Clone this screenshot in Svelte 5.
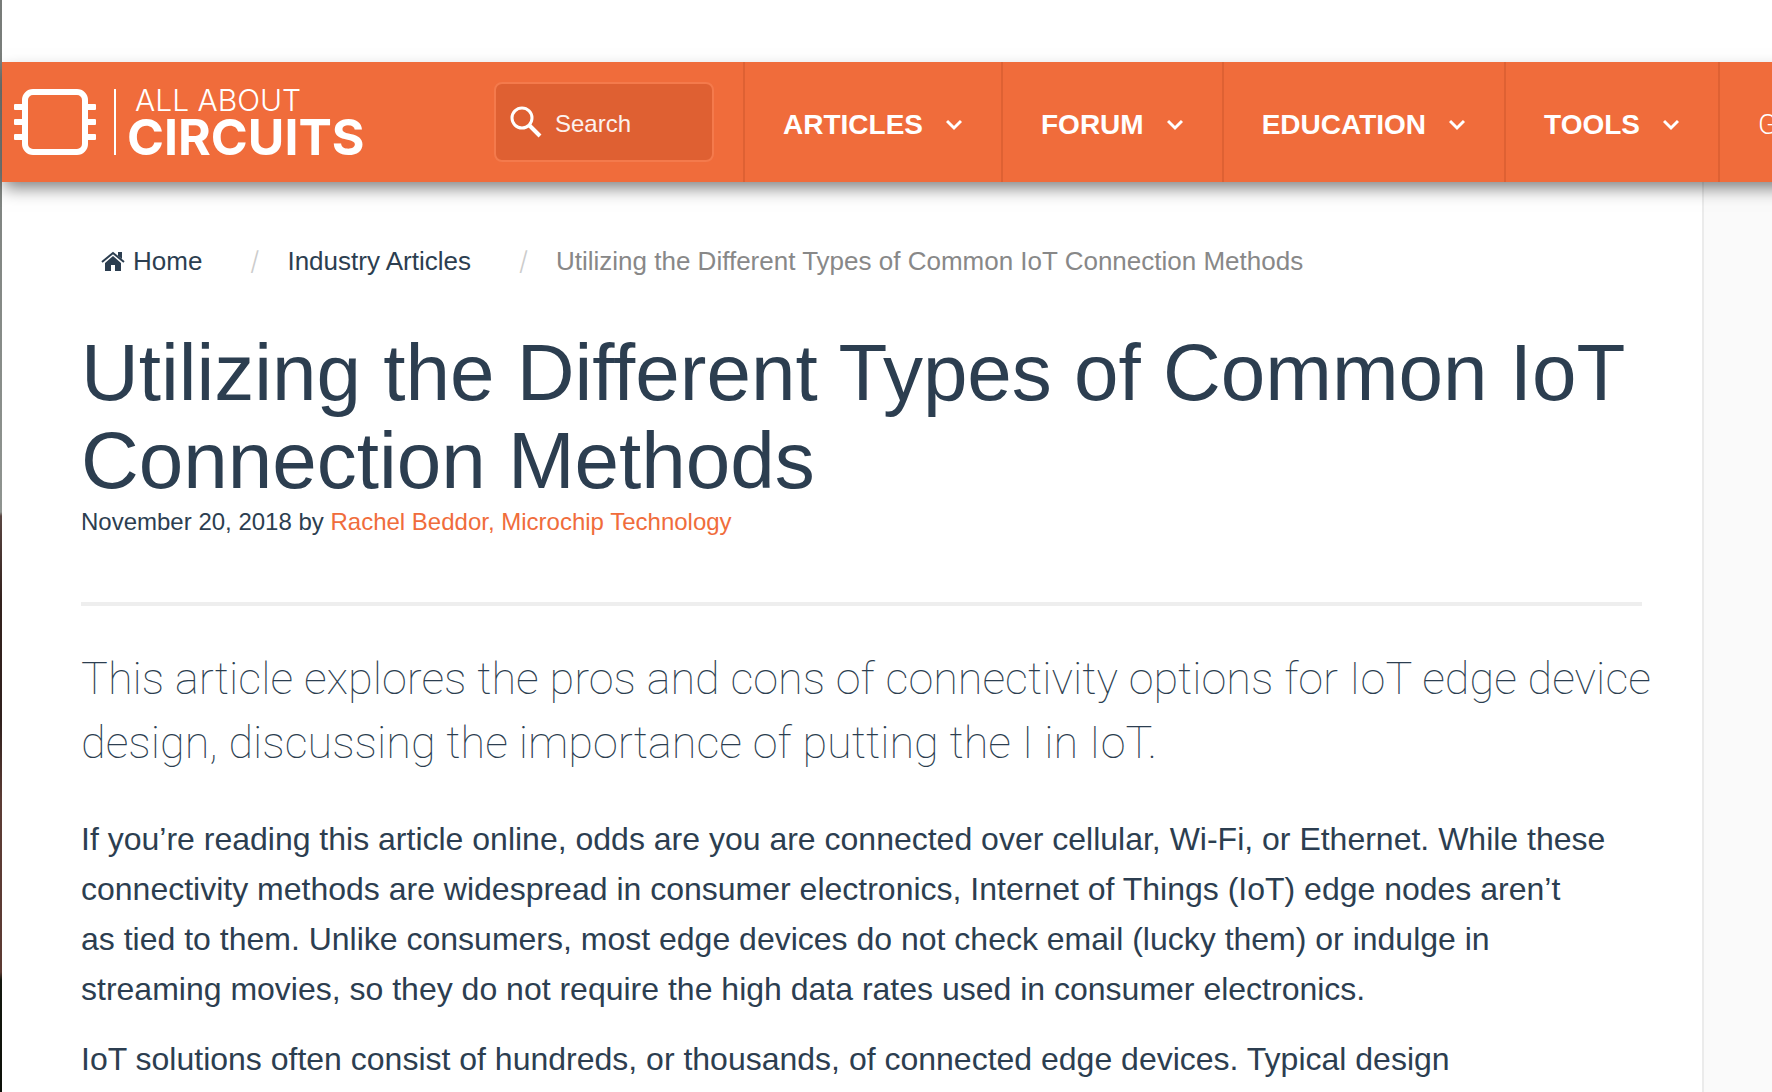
<script>
  const menu = ['ARTICLES', 'FORUM', 'EDUCATION', 'TOOLS'];
</script>

<div class="page">
  <div class="edge"></div>
  <div class="site">
    <header class="bar">
      <a class="logo" href="/" aria-label="All About Circuits">
        <svg class="chip" viewBox="0 0 84 68" width="84" height="68" aria-hidden="true">
          <g fill="#fff">
            <rect x="0" y="16" width="11" height="6" rx="1" />
            <rect x="0" y="31" width="11" height="6" rx="1" />
            <rect x="0" y="46" width="11" height="6" rx="1" />
            <rect x="71" y="16" width="11" height="6" rx="1" />
            <rect x="71" y="31" width="11" height="6" rx="1" />
            <rect x="71" y="46" width="11" height="6" rx="1" />
          </g>
          <rect x="11" y="4" width="60" height="60" rx="8" fill="none" stroke="#fff" stroke-width="6" />
        </svg>
        <span class="words">
          <span class="small">ALL ABOUT</span>
          <span class="big">CIRCUITS</span>
        </span>
      </a>
      <label class="search">
        <svg viewBox="0 0 32 32" width="32" height="32" aria-hidden="true">
          <circle cx="12" cy="12" r="10" fill="none" stroke="#fff" stroke-width="3" />
          <path d="M19 19 L30 30" stroke="#fff" stroke-width="4" />
        </svg>
        <input type="text" placeholder="Search" aria-label="Search" />
      </label>
      <nav>
        {#each menu as item}
          <button type="button">
            {item}
            <svg viewBox="0 0 16 12" width="16" height="12" aria-hidden="true">
              <path d="M1 2 L8 9 L15 2" fill="none" stroke="#fff" stroke-width="3" />
            </svg>
          </button>
        {/each}
        <a class="more" href="/">G</a>
      </nav>
    </header>

    <div class="columns">
      <main>
        <nav class="crumbs" aria-label="Breadcrumb">
          <a class="home" href="/">
            <svg viewBox="0 0 24 22" width="24" height="22" aria-hidden="true">
              <path d="M1 12 L12 3 L23 12" fill="none" stroke="#2c3e50" stroke-width="2" />
              <path d="M17 2 H21 V9 L17 6 Z M12 6 L20 13 V21 H14 V15 H10 V21 H4 V13 Z" fill="#2c3e50" />
            </svg>
            Home
          </a>
          <span class="slash">/</span>
          <a href="/">Industry Articles</a>
          <span class="slash">/</span>
          <span class="here">Utilizing the Different Types of Common IoT Connection Methods</span>
        </nav>
        <h1>Utilizing the Different Types of Common IoT Connection Methods</h1>
        <p class="byline">November 20, 2018 by <a href="/">Rachel Beddor, Microchip Technology</a></p>
        <hr />
        <p class="intro">
          This article explores the pros and cons of connectivity options for IoT edge device<br />
          design, discussing the importance of putting the I in IoT.
        </p>
        <p class="body">
          If you’re reading this article online, odds are you are connected over cellular, Wi-Fi, or Ethernet. While these<br />
          connectivity methods are widespread in consumer electronics, Internet of Things (IoT) edge nodes aren’t<br />
          as tied to them. Unlike consumers, most edge devices do not check email (lucky them) or indulge in<br />
          streaming movies, so they do not require the high data rates used in consumer electronics.
        </p>
        <p class="body">IoT solutions often consist of hundreds, or thousands, of connected edge devices. Typical design</p>
      </main>
      <aside></aside>
    </div>
  </div>
</div>

<style>
  :global(body) {
    margin: 0;
    background: #fff;
    overflow: hidden;
  }
  .page {
    display: flex;
    min-height: 100vh;
    overflow: hidden;
    font-family: 'Liberation Sans', Arial, sans-serif;
    color: #2c3e50;
  }
  .edge {
    flex: 0 0 2px;
    background: linear-gradient(#777b78 0, #8f9490 512px, #5a4642 516px, #33211d 600px, #30201d 720px, #5c3c35 800px, #5c3a33 972px, #14180f 980px, #0c0f08 100%);
  }
  .site {
    flex: 1;
    min-width: 0;
    display: flex;
    flex-direction: column;
    padding-top: 62px;
  }
  a {
    color: inherit;
    text-decoration: none;
  }
  .bar {
    display: flex;
    align-items: center;
    height: 120px;
    background: #f06c3b;
    box-shadow: 0 8px 16px -2px rgba(0, 0, 0, 0.5);
    position: relative;
    color: #fff;
    margin-right: -20px;
  }
  .logo {
    display: flex;
    align-items: center;
    flex: 0 0 480px;
    padding-left: 12px;
    box-sizing: border-box;
  }
  .words {
    display: flex;
    flex-direction: column;
    margin-left: 16px;
    padding-left: 11px;
    border-left: 2px solid #fff;
    height: 66px;
    white-space: nowrap;
  }
  .small {
    font: 300 30px/22px Inter, sans-serif;
    padding-left: 8px;
  }
  .big {
    font: 700 50px/52px Inter, sans-serif;
  }
  .search {
    flex: 0 0 220px;
    min-width: 0;
    margin: 0 29px 0 12px;
    height: 80px;
    box-sizing: border-box;
    border: 2px solid #f47a4c;
    border-radius: 8px;
    background: #df6032;
    display: flex;
    align-items: center;
    gap: 13px;
    padding: 0 14px;
  }
  .search svg {
    flex: none;
  }
  .search input {
    min-width: 0;
    flex: 1;
    border: 0;
    padding: 4px 0 0;
    background: none;
    outline: 0;
    color: #fff;
    font: 24px/28px 'Liberation Sans', Arial, sans-serif;
  }
  .search input::placeholder {
    color: #fff;
    opacity: 0.92;
  }
  .bar nav {
    flex: 1;
    min-width: 0;
    display: flex;
    align-self: stretch;
    overflow: hidden;
  }
  .bar button,
  .more {
    flex: none;
    display: flex;
    align-items: center;
    gap: 23px;
    border: 0;
    border-left: 2px solid #de6133;
    background: none;
    color: #fff;
    font: 700 28px/32px 'Liberation Sans', Arial, sans-serif;
    padding: 5px 39px 0 38px;
  }
  .more {
    font-family: Roboto, sans-serif;
    font-weight: 300;
  }
  .columns {
    flex: 1;
    display: flex;
  }
  main {
    flex: 1;
    min-width: 0;
    padding: 60px 60px 0 79px;
  }
  aside {
    flex: 0 0 68px;
    background: #fafafa;
    border-left: 2px solid #ebebeb;
  }
  .crumbs {
    display: flex;
    align-items: center;
    padding-left: 20px;
    font-size: 26px;
    line-height: 38px;
    white-space: nowrap;
  }
  .home {
    display: flex;
    align-items: center;
    gap: 8px;
  }
  .slash {
    color: #ccc;
    font-family: Inter, sans-serif;
    font-weight: 300;
    padding: 0 28px 0 48px;
  }
  .here {
    color: #888;
  }
  h1 {
    margin: 49px 0 0;
    font-size: 80px;
    font-weight: 400;
    line-height: 88px;
  }
  .byline {
    margin: 0;
    font-size: 24px;
    line-height: 34px;
  }
  .byline a {
    color: #f06c3b;
  }
  hr {
    margin: 63px 0 41px;
    border: 0;
    height: 4px;
    background: #eee;
  }
  .intro {
    margin: 0 0 39px;
    font: 100 45px/64px Roboto, sans-serif;
    white-space: nowrap;
  }
  .body {
    margin: 0 0 20px;
    font-size: 32px;
    line-height: 50px;
    white-space: nowrap;
  }
</style>
